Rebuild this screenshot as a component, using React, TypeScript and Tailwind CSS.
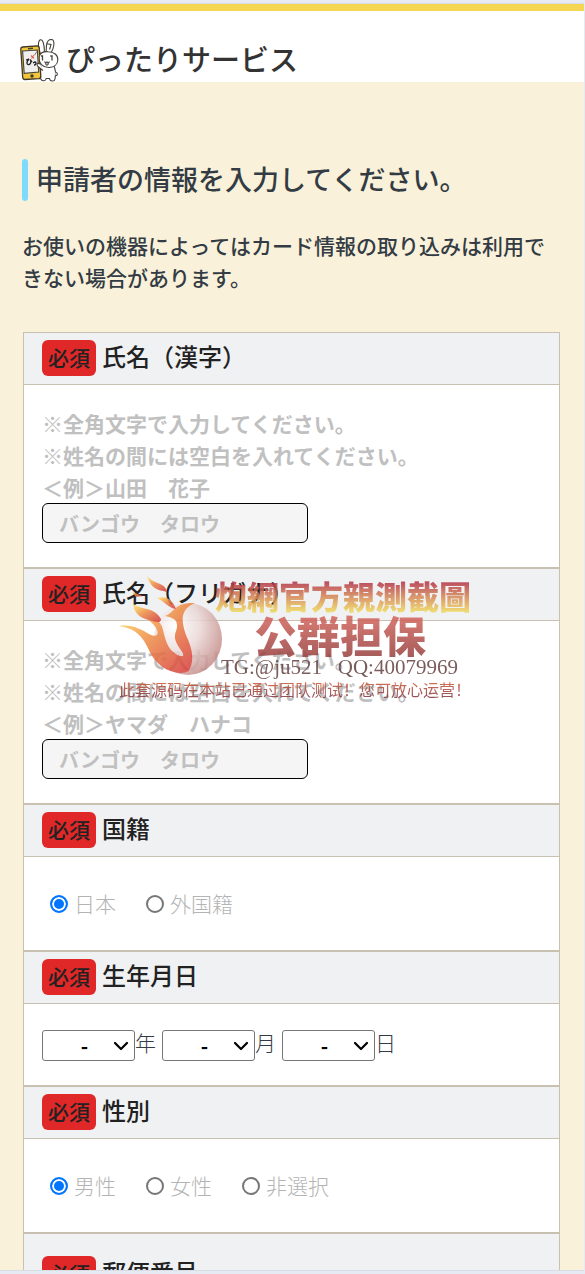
import React from 'react';
import { ChevronDown } from 'lucide-react';

interface FormSectionProps {
  title: string;
  tall?: boolean;
  children?: React.ReactNode;
}

const FormSection: React.FC<FormSectionProps> = ({ title, tall, children }) => (
  <fieldset aria-label={title} className="border border-[#c8c0b0] bg-white">
    <div
      className={`flex items-start gap-1.5 bg-[#f0f1f3] px-[18px] pb-2 border-b border-[#c8c0b0] ${
        tall ? 'pt-[22px]' : 'pt-[7px]'
      }`}
    >
      <span className="h-9 rounded-md bg-[#e12828] px-1.5 text-[21px] leading-[34px] font-medium">必須</span>
      <h2 className="text-2xl leading-8 font-medium">{title}</h2>
    </div>
    {children}
  </fieldset>
);

interface NameFieldProps {
  id: string;
  title: string;
  example: string;
}

const NameField: React.FC<NameFieldProps> = ({ id, title, example }) => (
  <FormSection title={title}>
    <div className="px-[18px] pt-[22px] pb-6">
      <label htmlFor={id} className="block text-[21px] leading-8 font-bold text-[#c0c0c0]">
        ※全角文字で入力してください。
        <br />
        ※姓名の間には空白を入れてください。
        <br />
        ＜例＞{example}
      </label>
      <input
        id={id}
        type="text"
        placeholder="バンゴウ　タロウ"
        className="block h-10 w-[266px] rounded-md border border-black bg-[#f5f5f5] px-4 text-xl font-bold placeholder:text-[#c0c0c0]"
      />
    </div>
  </FormSection>
);

interface RadioFieldProps {
  name: string;
  title: string;
  options: string[];
}

const RadioField: React.FC<RadioFieldProps> = ({ name, title, options }) => (
  <FormSection title={title}>
    <div className="flex flex-wrap gap-[30px] px-[26px] py-[30px]">
      {options.map((option, i) => (
        <label
          key={option}
          className="flex items-center gap-1.5 text-[21px] leading-[33px] font-light text-[#b4b4b4]"
        >
          <input
            type="radio"
            name={name}
            defaultChecked={i === 0}
            className="size-[18px] appearance-none rounded-full border-2 border-[#767676] bg-white checked:border-[#0075ff] checked:bg-[#0075ff] checked:shadow-[inset_0_0_0_2px_#fff]"
          />
          {option}
        </label>
      ))}
    </div>
  </FormSection>
);

const BirthdayField: React.FC = () => (
  <FormSection title="生年月日">
    <div className="flex flex-wrap gap-1.5 px-[18px] pt-[26px] pb-6">
      {['年', '月', '日'].map((unit) => (
        <label key={unit} className="flex text-[21px] leading-6 font-light text-[#333c44]">
          <span className="relative">
            <select className="block h-[31px] w-[93px] appearance-none rounded-[3px] border border-[#767676] bg-white pr-2 text-center text-xl leading-7 font-bold text-black">
              <option>-</option>
            </select>
            <ChevronDown
              className="pointer-events-none absolute top-1 right-0.5 size-6 text-black"
              strokeWidth={2.2}
            />
          </span>
          {unit}
        </label>
      ))}
    </div>
  </FormSection>
);

const RabbitLogo: React.FC = () => (
  <svg viewBox="0 0 40 44" className="h-11 w-10" fill="none" stroke="#45413d" strokeWidth="1.1">
    {/* ears */}
    <path d="M20.5 16C18 10 17.6 3.5 20.2 1.8C23 .8 24.6 8 24.4 14" fill="#fff" />
    <path d="M26 14C26.6 10 26 8 27 5C28 2 30 1.2 32 1.6C35.2 3 34 10 31 15" fill="#fff" />
    <path d="M26.8 5.8L31 6.4L29.6 11.5" />
    {/* body and feet */}
    <path d="M21 28C19.5 33 19.5 37 20.8 41C22 43.8 26 43 26.2 40.5L29.5 40.5C30 43.8 34.5 43.8 35 41C36 36 35.5 31 33.5 27" fill="#fff" />
    <path d="M35.3 34Q38.5 35 36.8 37.5L35.3 37.5" fill="#fff" />
    {/* phone */}
    <path d="M2.6 9L17 7.8Q19 7.8 19.2 10L20.8 38Q21 40.5 18.8 40.7L5 41.5Q2.9 41.5 2.7 39.2L.8 11.5Q.6 9.2 2.6 9Z" fill="#f1c738" stroke="#3e3628" strokeWidth="1.3" />
    <path d="M2.6 13L17.3 12L18.7 34L4.2 35.4Z" fill="#efefed" />
    <path d="M8 10.7L13 10.3" strokeWidth="1.5" />
    <circle cx="12" cy="38" r="1.2" fill="#3e3628" />
    <path d="M6 22L9 21C6 24 6.5 27 9 26.5C11.5 26 11 23 10.3 21.5L12 24M13 25Q16 23 16 25Q16 27 14 27" stroke="#222" strokeWidth="1.3" />
    <path d="M11 17.5L14 20.5M14 17L11.5 20.5" stroke="#e26254" />
    <path d="M14.5 17L17 13.5" strokeWidth="0.7" />
    {/* face */}
    <path d="M19.2 19C19.8 14.7 24 13.5 28 13.7C34 13.8 38 17 37.8 22C37.6 27 33.5 29.6 28.5 29.5C23.5 29.5 18.6 26 19.2 19Z" fill="#fff" />
    <path d="M21 18H22.5V22.5M30.3 18H32V22.5" strokeWidth="1.3" />
    <path d="M24.5 23.5Q26 26 27 24Q28 26 29.5 23.5M25.5 25.5Q27 29 28.5 25.5" />
    <path d="M20 26C17 24 16 27 18.5 29L23 32.5" fill="#fff" />
  </svg>
);

const FlameBall: React.FC = () => (
  <svg viewBox="0 0 104 100" className="absolute top-0 left-0 h-[100px] w-[104px]">
    <defs>
      <linearGradient id="flame" x1="0" y1="0.2" x2="0.8" y2="1">
        <stop offset="0" stopColor="#ffd65c" />
        <stop offset="0.45" stopColor="#ee8a45" />
        <stop offset="1" stopColor="#d8443c" />
      </linearGradient>
      <radialGradient id="ball" cx="0.3" cy="0.32" r="0.75">
        <stop offset="0" stopColor="#fff" />
        <stop offset="0.5" stopColor="#ead8d6" />
        <stop offset="1" stopColor="#c68f8b" />
      </radialGradient>
    </defs>
    <ellipse cx="69" cy="64" rx="34" ry="36" fill="url(#ball)" />
    <g fill="url(#flame)">
      <path d="M0 51C12 49 22 54 30 59C37 63 41 60 37 53C33 46 25 43 21 39C32 41 42 44 44 55C47 68 50 77 61 81C68 82 62 76 58 69C52 57 61 56 57 46C54 43 51 42 46 41C56 37 56 27 76 28C61 34 62 46 67 60C73 73 76 84 70 96C61 101 45 96 37 86C27 76 28 55 0 51Z" />
      <path d="M14 29C22 35 36 32 42 44C42 49 36 47 30 45C20 43 15 37 14 29Z" />
      <path d="M28 0C33 10 46 6 48 17C42 15 32 16 28 0Z" />
      <path d="M38 23C47 20 54 25 57 34C50 33 46 27 38 23Z" />
      <path d="M13 17L24 21L17 22Z" />
    </g>
  </svg>
);

const Watermark: React.FC = () => (
  <div className="pointer-events-none absolute top-[243px] left-[119px] h-[122px] w-[352px] whitespace-nowrap opacity-85">
    <FlameBall />
    <p className="absolute top-0 left-24 bg-linear-to-b from-[#b53548] from-20% to-[#eed45c] to-90% bg-clip-text text-[32px] leading-10 font-black text-transparent">
      炮網官方親測截圖
    </p>
    <p className="absolute top-9 left-[135px] bg-linear-to-b from-[#dc6960] to-[#97403e] bg-clip-text text-[43px] leading-[46px] font-black text-transparent">
      公群担保
    </p>
    <p className="absolute top-20 left-[102px] font-['Liberation_Serif',serif] text-[21px] leading-6 whitespace-pre text-[#654040]">
      TG:@ju521{'   '}QQ:40079969
    </p>
    <p className="absolute top-[104px] left-0 bg-linear-to-b from-[#e06030] to-[#7a303c] bg-clip-text font-['Noto_Sans_CJK_SC',sans-serif] text-base leading-5 text-transparent">
      此套源码在本站已通过团队测试！您可放心运营！
    </p>
  </div>
);

export default function App() {
  return (
    <div className="flex h-screen flex-col border-t-[3px] border-r border-b-[3px] border-[#e6eaf2] bg-[#faf1da] font-['Noto_Sans_CJK_JP',sans-serif] text-[#222]">
      <div className="min-h-0 flex-1 overflow-y-auto border-y border-[#d9dce2] [scrollbar-width:none]">
        <header className="flex items-end gap-1.5 border-t-[7px] border-[#f4d653] bg-white px-5 pt-[23px]">
          <RabbitLogo />
          <h1 className="text-[29px] leading-[48px] font-medium text-[#333]">ぴったりサービス</h1>
        </header>

        <main>
          <div className="px-[22px] pt-[77px] pb-[39px] text-[#333c44]">
            <div className="flex items-start gap-2">
              <span className="h-[42px] w-1.5 rounded-sm bg-[#7fdbfb]" />
              <h2 className="text-[27px] leading-10 font-medium">申請者の情報を入力してください。</h2>
            </div>
            <p className="mt-7 text-[21px] leading-8 font-medium">
              お使いの機器によってはカード情報の取り込みは利用できない場合があります。
            </p>
          </div>

          <form className="relative pr-6 pl-[23px]">
            <NameField id="kanji" title="氏名（漢字）" example="山田　花子" />
            <NameField id="kana" title="氏名（フリガナ）" example="ヤマダ　ハナコ" />
            <RadioField name="nationality" title="国籍" options={['日本', '外国籍']} />
            <BirthdayField />
            <RadioField name="gender" title="性別" options={['男性', '女性', '非選択']} />
            <FormSection title="郵便番号" tall />
            <Watermark />
          </form>
        </main>
      </div>
    </div>
  );
}
